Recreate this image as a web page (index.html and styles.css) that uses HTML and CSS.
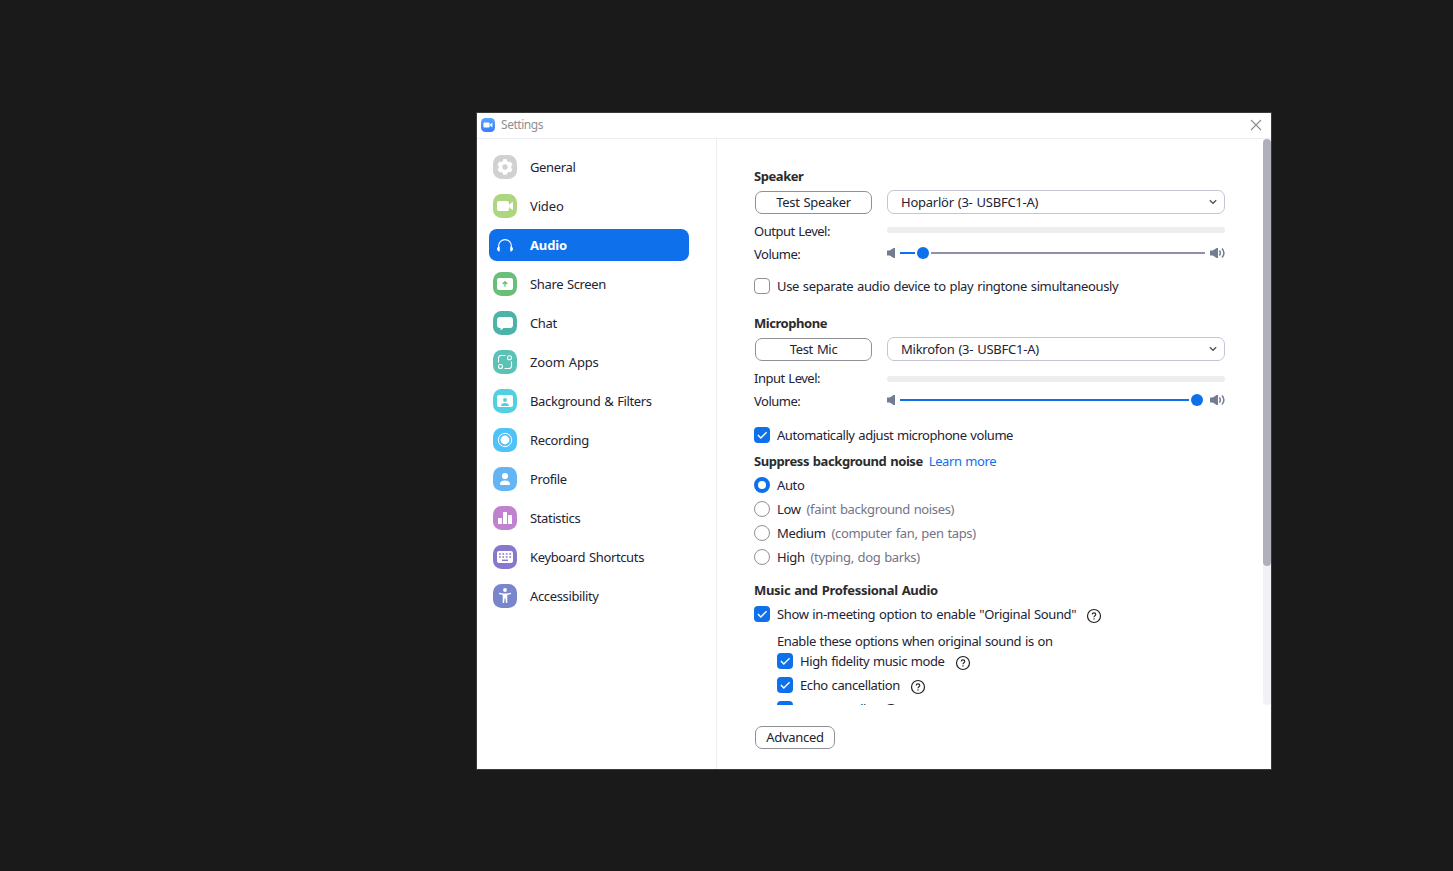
FILE: index.html
```html
<!DOCTYPE html>
<html lang="en">
<head>
    <meta charset="UTF-8">
    <meta name="viewport" content="width=device-width, initial-scale=1.0">
    <title>Settings</title>
    <link rel="stylesheet" href="styles.css">
</head>
<body>
    <!-- shared icons -->
    <svg class="sprite" width="0" height="0">
        <symbol id="check" viewBox="0 0 16 16"><path d="M3.9 8l2.9 3L12.6 5.2" fill="none" stroke="#fff" stroke-width="1.4"/></symbol>
        <symbol id="help" viewBox="0 0 16 16"><circle cx="8" cy="8" r="6.5" fill="none" stroke="#222" stroke-width="1.2"/><path d="M6.2 6.6c0-1.1.8-1.7 1.8-1.7s1.8.6 1.8 1.6c0 1.2-1.8 1.3-1.8 2.7" fill="none" stroke="#222" stroke-width="1.1"/><rect x="7.4" y="10.3" width="1.2" height="1.2" fill="#222"/></symbol>
        <symbol id="low" viewBox="0 0 8 12"><path d="M0 3.4h2.8L6.6 1H8v10H6.6L2.8 8.6H0z" fill="#747c92"/></symbol>
        <symbol id="loud" viewBox="0 0 15 12"><path d="M0 3.4h2.8L6.6 1H8v10H6.6L2.8 8.6H0z" fill="#747c92"/><path d="M9.4 3.6q2 2.4 0 4.8M12 1.5q3.8 4.5 0 9" fill="none" stroke="#747c92" stroke-width="1.5"/></symbol>
        <symbol id="chevron" viewBox="0 0 8 6"><path d="M.8 1.2L4 4.3l3.2-3.1" fill="none" stroke="#555562" stroke-width="1.4"/></symbol>
        <linearGradient id="logo-fill" x2="0" y2="1"><stop stop-color="#5aa5ff"/><stop offset="1" stop-color="#3a7cff"/></linearGradient>
    </svg>

    <div class="window">
        <header class="titlebar">
            <svg class="logo" viewBox="0 0 14 14"><rect width="14" height="14" rx="4.5" fill="url(#logo-fill)"/><rect x="2.4" y="4.6" width="6.2" height="4.8" rx="1.2" fill="#fff"/><path d="M9.1 6.3l2.3-1.6v4.6L9.1 7.7z" fill="#fff"/></svg>
            <span class="title">Settings</span>
            <svg class="close" viewBox="0 0 12 12"><path d="M1 1l10 10M11 1L1 11" stroke="#8c8c8c" stroke-width="1.1"/></svg>
        </header>

        <div class="body">
            <nav class="sidebar">
                <a class="item">
                    <svg viewBox="0 0 24 24"><rect width="24" height="24" rx="8.5" fill="#d1d1d1"/><circle cx="12" cy="12" r="4.5" fill="none" stroke="#fff" stroke-width="3.6"/><path d="M12 4.2v3M12 16.8v3M5.4 8.2l2.4 1.4M16.2 14.4l2.4 1.4M5.4 15.8l2.4-1.4M16.2 9.6l2.4-1.4" stroke="#fff" stroke-width="4"/></svg>
                    <span>General</span>
                </a>
                <a class="item wide">
                    <svg viewBox="0 0 24 24"><rect width="24" height="24" rx="8.5" fill="#aed681"/><rect x="4" y="7" width="12" height="10" rx="2" fill="#fff"/><path d="M16 11l3-2.7q1-.6 1 .5v6.4q0 1.1-1 .5l-3-2.7z" fill="#fff"/></svg>
                    <span>Video</span>
                </a>
                <a class="item wide active">
                    <svg viewBox="0 0 24 24"><path d="M5.6 17v-4a6.4 6.4 0 0 1 12.8 0v4" fill="none" stroke="#fff" stroke-width="1.1"/><path d="M4 15.6q0-1.8 2.7-2.2v5q-2.7.2-2.7-2.8zM20 15.6q0-1.8-2.7-2.2v5q2.7.2 2.7-2.8z" fill="#fff"/></svg>
                    <span>Audio</span>
                </a>
                <a class="item">
                    <svg viewBox="0 0 24 24"><rect width="24" height="24" rx="8.5" fill="#6abf78"/><rect x="4" y="6" width="16" height="12" rx="2" fill="#fff"/><path d="M12 14.8V10.2M9.7 12L12 9.7 14.3 12" fill="none" stroke="#6abf78" stroke-width="1.3"/></svg>
                    <span>Share Screen</span>
                </a>
                <a class="item">
                    <svg viewBox="0 0 24 24"><rect width="24" height="24" rx="8.5" fill="#4bb3a8"/><path d="M7 6h10q3 0 3 3v5q0 3-3 3h-6.5L7.6 19.4V17H7q-3 0-3-3V9q0-3 3-3z" fill="#fff"/></svg>
                    <span>Chat</span>
                </a>
                <a class="item wide">
                    <svg viewBox="0 0 24 24"><rect width="24" height="24" rx="8.5" fill="#5ac2b7"/><g fill="none" stroke="#fff" stroke-width="1.1"><circle cx="16.5" cy="7.7" r="2"/><circle cx="7.5" cy="16.5" r="2"/><path d="M12.5 5.5H8.3q-2.8 0-2.8 2.8v4.2M11.5 18.5h4.2q2.8 0 2.8-2.8v-4.2"/></g></svg>
                    <span>Zoom Apps</span>
                </a>
                <a class="item">
                    <svg viewBox="0 0 24 24"><rect width="24" height="24" rx="8.5" fill="#50d1e2"/><rect x="4" y="6" width="16" height="12" rx="2" fill="#fff"/><circle cx="12" cy="11" r="2" fill="#50d1e2"/><path d="M8 17q0-3 4-3t4 3z" fill="#50d1e2"/></svg>
                    <span>Background &amp; Filters</span>
                </a>
                <a class="item">
                    <svg viewBox="0 0 24 24"><rect width="24" height="24" rx="8.5" fill="#4fc3f7"/><circle cx="12" cy="12" r="6.7" fill="none" stroke="#fff" stroke-width="1"/><circle cx="12" cy="12" r="4.4" fill="#fff"/></svg>
                    <span>Recording</span>
                </a>
                <a class="item">
                    <svg viewBox="0 0 24 24"><rect width="24" height="24" rx="8.5" fill="#64b5f6"/><circle cx="12" cy="9" r="3.1" fill="#fff"/><path d="M7 17q0-3.5 5-3.5t5 3.5q0 1-1 1H8q-1 0-1-1z" fill="#fff"/></svg>
                    <span>Profile</span>
                </a>
                <a class="item">
                    <svg viewBox="0 0 24 24"><rect width="24" height="24" rx="8.5" fill="#c081d0"/><path d="M5 12.5q0-.5.5-.5h3q.5 0 .5.5V18H5zM10 6.5q0-.5.5-.5h3q.5 0 .5.5V18h-4zM15 9.5q0-.5.5-.5h3q.5 0 .5.5V18h-4z" fill="#fff"/></svg>
                    <span>Statistics</span>
                </a>
                <a class="item">
                    <svg viewBox="0 0 24 24"><rect width="24" height="24" rx="8.5" fill="#8877cc"/><rect x="4" y="6" width="16" height="12" rx="2" fill="#fff"/><path d="M6 9h12M6 12h12" stroke="#8877cc" stroke-width="1.6" stroke-dasharray="1.7 1.73"/><path d="M9 15.3h6" stroke="#8877cc" stroke-width="1.4"/></svg>
                    <span>Keyboard Shortcuts</span>
                </a>
                <a class="item">
                    <svg viewBox="0 0 24 24"><rect width="24" height="24" rx="8.5" fill="#7986cb"/><circle cx="12" cy="6" r="1.9" fill="#fff"/><path d="M6 8.8l4.4.6h3.2l4.4-.6.1 1.2-3.8.9v8.1h-1.4l-.5-4.8h-.8l-.5 4.8H9.7v-8.1L5.9 10z" fill="#fff"/></svg>
                    <span>Accessibility</span>
                </a>
            </nav>

            <main class="main">
                <div class="pane">
                    <div class="content">
                        <section class="device">
                            <h2>Speaker</h2>
                            <div class="row device-row">
                                <div class="label-col"><button class="btn">Test Speaker</button></div>
                                <div class="select"><span>Hoparlör (3- USBFC1-A)</span><svg><use href="#chevron"/></svg></div>
                            </div>
                            <div class="row level-row">
                                <div class="label-col"><span>Output Level:</span></div>
                                <div class="meter up"></div>
                            </div>
                            <div class="row volume-row">
                                <div class="label-col"><span>Volume:</span></div>
                                <div class="slider">
                                    <svg class="low"><use href="#low"/></svg>
                                    <div class="track">
                                        <div class="fill" style="width: 15px"></div>
                                        <div class="thumb"></div>
                                        <div class="rest"></div>
                                    </div>
                                    <svg class="loud"><use href="#loud"/></svg>
                                </div>
                            </div>
                            <div class="row option ringtone"><i class="box"></i><span>Use separate audio device to play ringtone simultaneously</span></div>
                        </section>

                        <section class="device mic">
                            <h2>Microphone</h2>
                            <div class="row device-row">
                                <div class="label-col"><button class="btn">Test Mic</button></div>
                                <div class="select"><span>Mikrofon (3- USBFC1-A)</span><svg><use href="#chevron"/></svg></div>
                            </div>
                            <div class="row level-row">
                                <div class="label-col"><span>Input Level:</span></div>
                                <div class="meter down"></div>
                            </div>
                            <div class="row volume-row">
                                <div class="label-col"><span>Volume:</span></div>
                                <div class="slider">
                                    <svg class="low"><use href="#low"/></svg>
                                    <div class="track">
                                        <div class="fill" style="width: 289px"></div>
                                        <div class="thumb"></div>
                                    </div>
                                    <svg class="loud"><use href="#loud"/></svg>
                                </div>
                            </div>
                            <div class="row option auto-adjust"><i class="box on"><svg><use href="#check"/></svg></i><span>Automatically adjust microphone volume</span></div>
                        </section>

                        <section>
                            <h2 class="noise"><span>Suppress background noise</span><a class="link">Learn more</a></h2>
                            <div class="row option"><i class="radio on"></i><span>Auto</span></div>
                            <div class="row option"><i class="radio"></i><span>Low</span><span class="hint">(faint background noises)</span></div>
                            <div class="row option"><i class="radio"></i><span>Medium</span><span class="hint">(computer fan, pen taps)</span></div>
                            <div class="row option"><i class="radio"></i><span>High</span><span class="hint">(typing, dog barks)</span></div>
                        </section>

                        <section class="music">
                            <h2>Music and Professional Audio</h2>
                            <div class="row option original"><i class="box on"><svg><use href="#check"/></svg></i><span>Show in-meeting option to enable "Original Sound"</span><svg class="help"><use href="#help"/></svg></div>
                            <div class="nested">
                                <p>Enable these options when original sound is on</p>
                                <div class="row option"><i class="box on"><svg><use href="#check"/></svg></i><span>High fidelity music mode</span><svg class="help"><use href="#help"/></svg></div>
                                <div class="row option"><i class="box on"><svg><use href="#check"/></svg></i><span>Echo cancellation</span><svg class="help"><use href="#help"/></svg></div>
                                <div class="row option"><i class="box on"><svg><use href="#check"/></svg></i><span>Stereo audio</span><svg class="help"><use href="#help"/></svg></div>
                            </div>
                        </section>
                    </div>
                    <div class="scrollbar"><div class="scroll-thumb"></div></div>
                </div>
                <footer class="footer"><button class="btn advanced">Advanced</button></footer>
            </main>
        </div>
    </div>
</body>
</html>
```

FILE: styles.css
```css
* {
    margin: 0;
    padding: 0;
    box-sizing: border-box;
}

body {
    height: 871px;
    padding: 113px 0 0 477px;
    background: #1a1a1a;
    color: #232333;
    font-family: "Noto Sans", "Open Sans", sans-serif;
    font-size: 13px;
    line-height: 18px;
    letter-spacing: -0.36px;
    word-spacing: 0.8px;
    overflow: hidden;
    white-space: nowrap;
}

svg {
    display: block;
    flex: none;
}

.sprite {
    position: absolute;
}

.window {
    display: flex;
    flex-direction: column;
    width: 794px;
    height: 656px;
    background: #fff;
    outline: 1px solid #3a3a3a;
}

.titlebar {
    display: flex;
    align-items: center;
    height: 26px;
    padding: 0 9px 1px 4px;
    border-bottom: 1px solid #ededf4;
}

.logo {
    width: 14px;
    height: 14px;
}

.title {
    margin-left: 6px;
    color: #909096;
    font-size: 12px;
    letter-spacing: -0.45px;
}

.close {
    width: 12px;
    height: 12px;
    margin-left: auto;
}

.body {
    display: flex;
    flex: 1;
    min-height: 0;
}

/* sidebar */
.sidebar {
    display: flex;
    flex-direction: column;
    gap: 7px;
    width: 240px;
    padding: 12px 0 0 12px;
    border-right: 1px solid #ededf4;
}

.item {
    display: flex;
    align-items: center;
    gap: 13px;
    width: 200px;
    height: 32px;
    padding-left: 4px;
    border-radius: 8px;
}

.item.wide {
    letter-spacing: -0.15px;
}

.item svg {
    width: 24px;
    height: 24px;
}

.item.active {
    background: #0e71eb;
    color: #fff;
    font-weight: 700;
}

/* right side */
.main {
    display: flex;
    flex: 1;
    flex-direction: column;
}

.pane {
    display: flex;
    justify-content: space-between;
    height: 566px;
    overflow: hidden;
}

.content {
    width: 471px;
    margin-left: 37px;
    padding-top: 26px;
}

.scrollbar {
    width: 8px;
    border-radius: 4px;
    background: #f1f1f6;
}

.scroll-thumb {
    height: 427px;
    border-radius: 4px;
    background: #b0b0ba;
}

.footer {
    padding: 21px 0 0 38px;
}

h2 {
    display: flex;
    align-items: center;
    height: 22px;
    color: #2b2b2e;
    font-size: 13px;
    font-weight: 700;
    letter-spacing: -0.3px;
}

.device h2 {
    letter-spacing: -0.45px;
}

.row {
    display: flex;
    align-items: center;
}

.label-col {
    width: 133px;
    letter-spacing: -0.5px;
}

.device-row {
    height: 30px;
}

.level-row {
    height: 28px;
}

.volume-row {
    height: 18px;
}

.btn {
    display: block;
    width: 117px;
    height: 23px;
    margin: 1px 0 0 1px;
    padding-bottom: 1px;
    border: 1px solid #909096;
    border-radius: 7px;
    background: #fff;
    color: #232333;
    font: inherit;
    line-height: 20px;
    letter-spacing: -0.3px;
    word-spacing: inherit;
}

.btn.advanced {
    width: 80px;
    margin: 0;
}

.select {
    display: flex;
    align-items: center;
    justify-content: space-between;
    width: 338px;
    height: 24px;
    padding: 0 7px 0 13px;
    border: 1px solid #c4c4d6;
    border-radius: 7px;
    letter-spacing: -0.24px;
}

.select svg {
    width: 8px;
    height: 6px;
}

.meter {
    width: 338px;
    height: 6px;
    border-radius: 3px;
    background: #ededed;
}

.meter.up {
    margin-bottom: 2px;
}

.meter.down {
    margin-top: 2px;
}

.slider {
    display: flex;
    align-items: center;
    width: 338px;
    padding-bottom: 2px;
}

.low {
    width: 8px;
    height: 12px;
}

.loud {
    width: 15px;
    height: 12px;
}

.track {
    display: flex;
    align-items: center;
    width: 305px;
    margin: 0 5px;
}

.fill {
    height: 2px;
    background: #0e71eb;
}

.thumb {
    width: 12px;
    height: 12px;
    margin: 0 2px;
    border-radius: 50%;
    background: #0e71eb;
}

.rest {
    flex: 1;
    height: 2px;
    background: #9090a8;
}

.option {
    height: 24px;
}

.ringtone {
    margin-top: 11px;
}

.mic {
    margin-top: 14px;
}

.auto-adjust {
    margin-top: 13px;
    letter-spacing: -0.44px;
}

.box,
.radio {
    width: 16px;
    height: 16px;
    margin-right: 7px;
    border: 1px solid #909096;
    border-radius: 4px;
}

.box.on {
    border: 0;
    background: #0e71eb;
}

.box svg {
    width: 16px;
    height: 16px;
}

.radio {
    border-radius: 50%;
}

.radio.on {
    border: 4px solid #0e71eb;
}

.hint {
    margin-left: 6px;
    color: #747487;
}

.noise {
    height: 26px;
    padding-top: 2px;
    letter-spacing: -0.42px;
}

.link {
    margin-left: 6px;
    color: #0e71eb;
    font-weight: 400;
}

.music {
    margin-top: 10px;
}

.original {
    margin-top: 1px;
}

.help {
    width: 16px;
    height: 16px;
    margin: 3px 0 0 10px;
}

.nested {
    padding: 5px 0 0 23px;
    letter-spacing: -0.4px;
}

.nested p {
    display: flex;
    align-items: center;
    height: 18px;
    padding-top: 2px;
}
```
